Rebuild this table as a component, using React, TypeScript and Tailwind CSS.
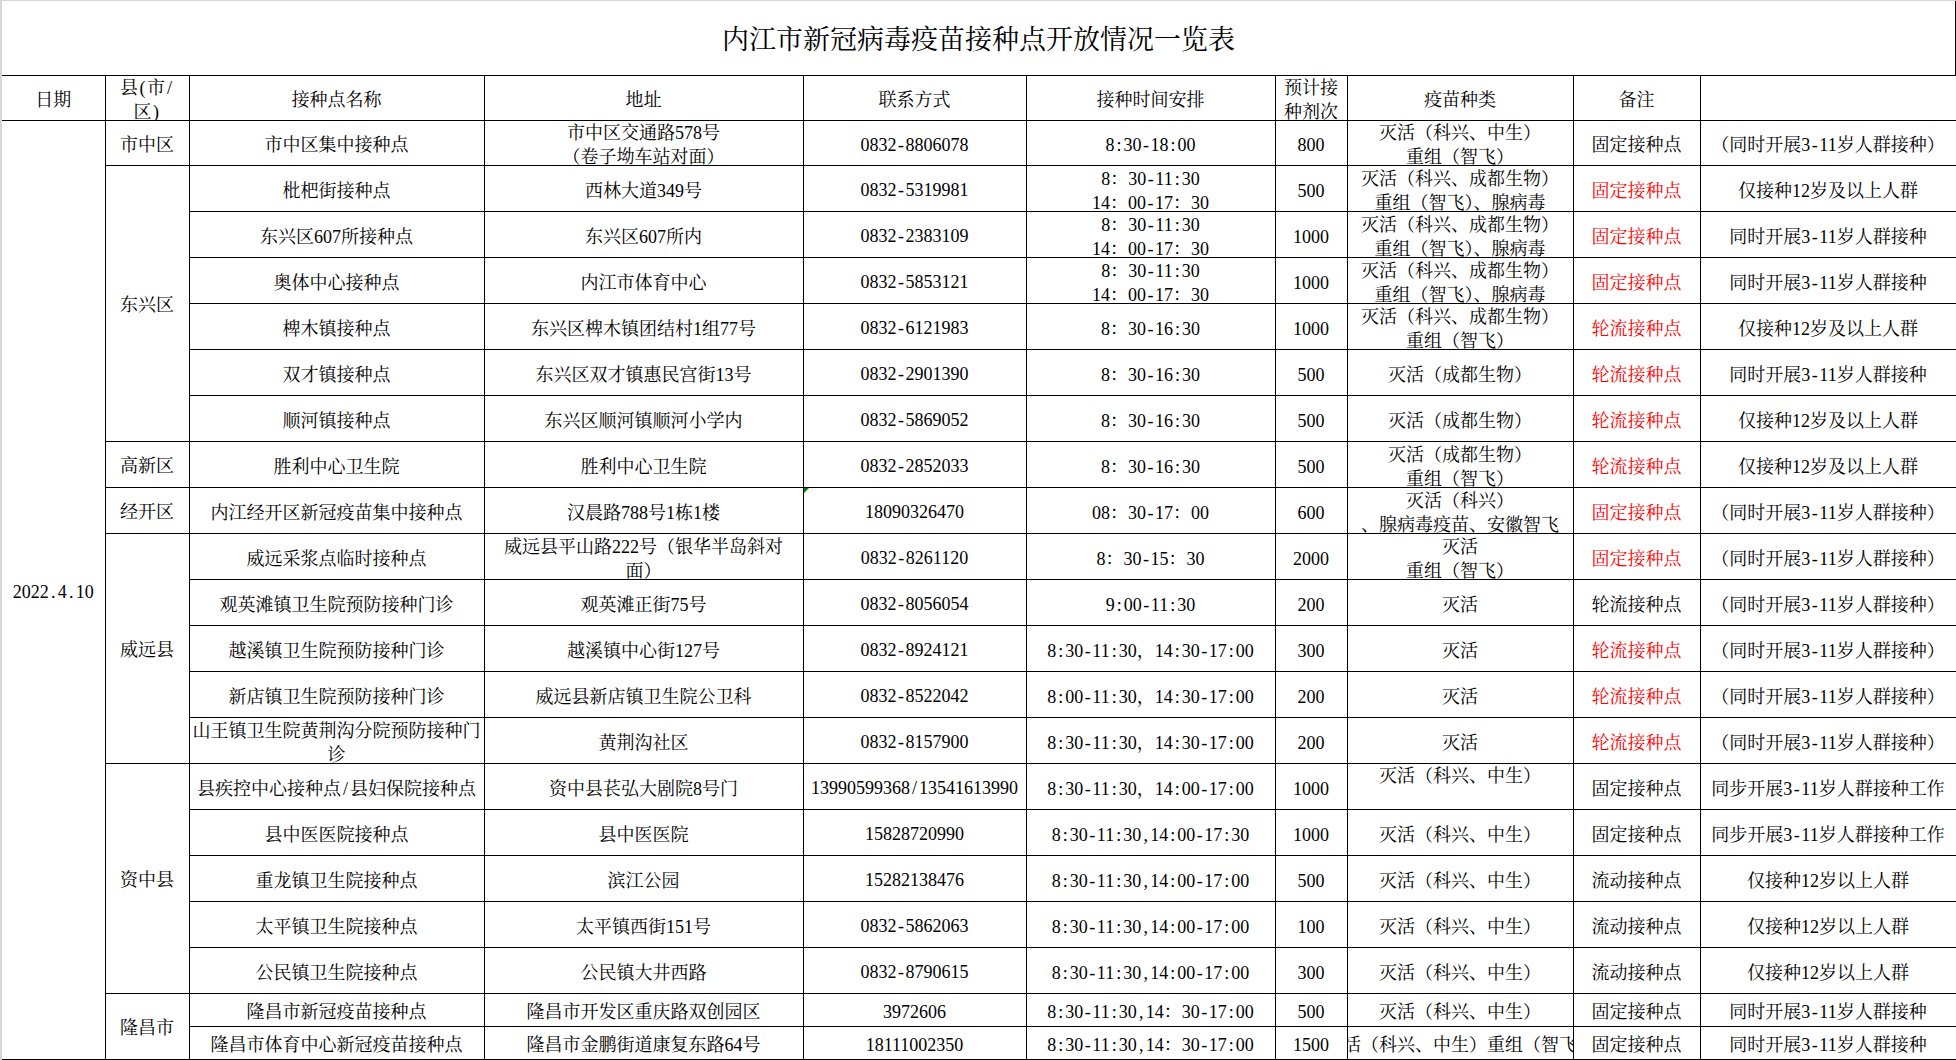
import React from "react";

type Row = {
  county?: [string, number];
  name: string;
  addr: string;
  phone: string;
  time: string;
  n: string;
  vac: string;
  kind: string;
  red?: boolean;
  note: string;
  h: string;
  top?: boolean;
  nowrap?: boolean;
  flag?: boolean;
};

const dx2 = "8：30-11:30\n14：00-17：30";
const dxVac = "灭活（科兴、成都生物）\n重组（智飞）、腺病毒";
const both = "（同时开展3-11岁人群接种）";
const only12 = "仅接种12岁及以上人群";
const same = "同时开展3-11岁人群接种";
const zz = "灭活（科兴、中生）";

const rows: Row[] = [
  { county: ["市中区", 1], name: "市中区集中接种点", addr: "市中区交通路578号\n（卷子坳车站对面）", phone: "0832-8806078", time: "8:30-18:00", n: "800", vac: "灭活（科兴、中生）\n重组（智飞）", kind: "固定接种点", note: both, h: "h-[44px]" },
  { county: ["东兴区", 6], name: "枇杷街接种点", addr: "西林大道349号", phone: "0832-5319981", time: dx2, n: "500", vac: dxVac, kind: "固定接种点", red: true, note: only12, h: "h-[45px]" },
  { name: "东兴区607所接种点", addr: "东兴区607所内", phone: "0832-2383109", time: dx2, n: "1000", vac: dxVac, kind: "固定接种点", red: true, note: same, h: "h-[45px]" },
  { name: "奥体中心接种点", addr: "内江市体育中心", phone: "0832-5853121", time: dx2, n: "1000", vac: dxVac, kind: "固定接种点", red: true, note: same, h: "h-[45px]" },
  { name: "椑木镇接种点", addr: "东兴区椑木镇团结村1组77号", phone: "0832-6121983", time: "8：30-16:30", n: "1000", vac: "灭活（科兴、成都生物）\n重组（智飞）", kind: "轮流接种点", red: true, note: only12, h: "h-[45px]" },
  { name: "双才镇接种点", addr: "东兴区双才镇惠民宫街13号", phone: "0832-2901390", time: "8：30-16:30", n: "500", vac: "灭活（成都生物）", kind: "轮流接种点", red: true, note: same, h: "h-[45px]" },
  { name: "顺河镇接种点", addr: "东兴区顺河镇顺河小学内", phone: "0832-5869052", time: "8：30-16:30", n: "500", vac: "灭活（成都生物）", kind: "轮流接种点", red: true, note: only12, h: "h-[45px]" },
  { county: ["高新区", 1], name: "胜利中心卫生院", addr: "胜利中心卫生院", phone: "0832-2852033", time: "8：30-16:30", n: "500", vac: "灭活（成都生物）\n重组（智飞）", kind: "轮流接种点", red: true, note: only12, h: "h-[45px]" },
  { county: ["经开区", 1], name: "内江经开区新冠疫苗集中接种点", addr: "汉晨路788号1栋1楼", phone: "18090326470", time: "08：30-17：00", n: "600", vac: "灭活（科兴）\n、腺病毒疫苗、安徽智飞", kind: "固定接种点", red: true, note: both, h: "h-[45px]", flag: true },
  { county: ["威远县", 5], name: "威远采浆点临时接种点", addr: "威远县平山路222号（银华半岛斜对\n面）", phone: "0832-8261120", time: "8：30-15：30", n: "2000", vac: "灭活\n重组（智飞）", kind: "固定接种点", red: true, note: both, h: "h-[45px]" },
  { name: "观英滩镇卫生院预防接种门诊", addr: "观英滩正街75号", phone: "0832-8056054", time: "9:00-11:30", n: "200", vac: "灭活", kind: "轮流接种点", note: both, h: "h-[45px]" },
  { name: "越溪镇卫生院预防接种门诊", addr: "越溪镇中心街127号", phone: "0832-8924121", time: "8:30-11:30，14:30-17:00", n: "300", vac: "灭活", kind: "轮流接种点", red: true, note: both, h: "h-[45px]" },
  { name: "新店镇卫生院预防接种门诊", addr: "威远县新店镇卫生院公卫科", phone: "0832-8522042", time: "8:00-11:30，14:30-17:00", n: "200", vac: "灭活", kind: "轮流接种点", red: true, note: both, h: "h-[45px]" },
  { name: "山王镇卫生院黄荆沟分院预防接种门\n诊", addr: "黄荆沟社区", phone: "0832-8157900", time: "8:30-11:30，14:30-17:00", n: "200", vac: "灭活", kind: "轮流接种点", red: true, note: both, h: "h-[45px]" },
  { county: ["资中县", 5], name: "县疾控中心接种点/县妇保院接种点", addr: "资中县苌弘大剧院8号门", phone: "13990599368/13541613990", time: "8:30-11:30，14:00-17:00", n: "1000", vac: zz, kind: "固定接种点", note: "同步开展3-11岁人群接种工作", h: "h-[45px]", top: true },
  { name: "县中医医院接种点", addr: "县中医医院", phone: "15828720990", time: "8:30-11:30,14:00-17:30", n: "1000", vac: zz, kind: "固定接种点", note: "同步开展3-11岁人群接种工作", h: "h-[45px]" },
  { name: "重龙镇卫生院接种点", addr: "滨江公园", phone: "15282138476", time: "8:30-11:30,14:00-17:00", n: "500", vac: zz, kind: "流动接种点", note: "仅接种12岁以上人群", h: "h-[45px]" },
  { name: "太平镇卫生院接种点", addr: "太平镇西街151号", phone: "0832-5862063", time: "8:30-11:30,14:00-17:00", n: "100", vac: zz, kind: "流动接种点", note: "仅接种12岁以上人群", h: "h-[45px]" },
  { name: "公民镇卫生院接种点", addr: "公民镇大井西路", phone: "0832-8790615", time: "8:30-11:30,14:00-17:00", n: "300", vac: zz, kind: "流动接种点", note: "仅接种12岁以上人群", h: "h-[45px]" },
  { county: ["隆昌市", 2], name: "隆昌市新冠疫苗接种点", addr: "隆昌市开发区重庆路双创园区", phone: "3972606", time: "8:30-11:30,14：30-17:00", n: "500", vac: zz, kind: "固定接种点", note: same, h: "h-[32px]" },
  { name: "隆昌市体育中心新冠疫苗接种点", addr: "隆昌市金鹏街道康复东路64号", phone: "18111002350", time: "8:30-11:30,14：30-17:00", n: "1500", vac: "灭活（科兴、中生）重组（智飞）", kind: "固定接种点", note: same, h: "h-[32px]", nowrap: true },
];

// half-width punctuation takes half an em, like the sheet's song font
function txt(s: string) {
  const parts = s.split(/([:\-,./()])/);
  return (
    <span>
      {parts.map((p, i) =>
        i % 2 === 1 ? (
          <span key={i} className="inline-block w-[0.5em] text-center">
            {p}
          </span>
        ) : (
          p
        )
      )}
    </span>
  );
}

function Cell({ h, cls = "", children }: { h: string; cls?: string; children?: string }) {
  return (
    <td className="border border-black p-0">
      <div className={`relative flex items-center justify-center overflow-hidden whitespace-pre-line pt-[4px] text-center leading-[24px] ${h} ${cls}`}>
        {children ? txt(children) : null}
      </div>
    </td>
  );
}

export default function App() {
  return (
    <div className="h-[1060px] w-[1956px] overflow-hidden border-l-2 border-t border-[#d6d6d6] bg-white text-[18px] text-black font-['Liberation_Serif','Noto_Serif_CJK_SC','Noto_Sans_CJK_SC',serif]">
      <div className="flex h-[74px] items-center justify-center border-r border-black pt-[5px] text-[27px]">
        内江市新冠病毒疫苗接种点开放情况一览表
      </div>
      <table className="w-[1954px] table-fixed border-collapse">
        <colgroup>
          <col className="w-[103px]" />
          <col className="w-[84px]" />
          <col className="w-[295px]" />
          <col className="w-[319px]" />
          <col className="w-[223px]" />
          <col className="w-[249px]" />
          <col className="w-[72px]" />
          <col className="w-[226px]" />
          <col className="w-[127px]" />
          <col className="w-[256px]" />
        </colgroup>
        <tbody>
          <tr>
            <td className="border border-l-0 border-black p-0">
              <div className="flex h-[44px] items-center justify-center pt-[4px]">日期</div>
            </td>
            <Cell h="h-[44px]" cls="leading-[20px]">{"县(市/\n区)"}</Cell>
            <Cell h="h-[44px]">接种点名称</Cell>
            <Cell h="h-[44px]">地址</Cell>
            <Cell h="h-[44px]">联系方式</Cell>
            <Cell h="h-[44px]">接种时间安排</Cell>
            <Cell h="h-[44px]">{"预计接\n种剂次"}</Cell>
            <Cell h="h-[44px]">疫苗种类</Cell>
            <Cell h="h-[44px]">备注</Cell>
            <Cell h="h-[44px]" />
          </tr>
          {rows.map((r, i) => (
            <tr key={i}>
              {i === 0 && (
                <td rowSpan={21} className="border border-l-0 border-black p-0 pt-[4px] text-center">
                  {txt("2022.4.10")}
                </td>
              )}
              {r.county && (
                <td rowSpan={r.county[1]} className="border border-black p-0 pt-[4px] text-center">
                  {r.county[0]}
                </td>
              )}
              <Cell h={r.h}>{r.name}</Cell>
              <Cell h={r.h}>{r.addr}</Cell>
              <td className="border border-black p-0">
                <div className={`relative flex items-center justify-center overflow-hidden pt-[4px] ${r.h}`}>
                  {r.flag && (
                    <span className="absolute left-0 top-0 h-0 w-0 border-r-[5px] border-t-[5px] border-r-transparent border-t-[#008000]" />
                  )}
                  {txt(r.phone)}
                </div>
              </td>
              <Cell h={r.h}>{r.time}</Cell>
              <Cell h={r.h}>{r.n}</Cell>
              <Cell h={r.h} cls={r.top ? "!items-start !pt-0" : r.nowrap ? "!whitespace-nowrap" : ""}>
                {r.vac}
              </Cell>
              <Cell h={r.h} cls={r.red ? "text-[#ff0000]" : ""}>{r.kind}</Cell>
              <Cell h={r.h}>{r.note}</Cell>
            </tr>
          ))}
        </tbody>
      </table>
    </div>
  );
}
